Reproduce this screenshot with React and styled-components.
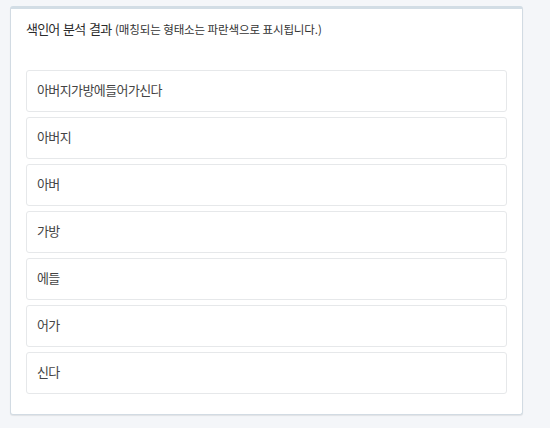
import React from 'react';
import styled, { createGlobalStyle } from 'styled-components';

const GlobalStyle = createGlobalStyle`
  body {
    margin: 0;
    background: #f4f6f9;
    font-family: "Noto Sans CJK KR", "Noto Sans", sans-serif;
    color: #333;
  }
`;

const Page = styled.div`
  padding: 6px 27px 14px 10px;
`;

const Box = styled.section`
  background: #fff;
  border: 1px solid #d2dbe3;
  border-top: 3px solid #d2dde5;
  border-radius: 3px;
  box-shadow: 0 1px 1px rgba(0, 0, 0, 0.08);
  padding: 0 15px 20px;
`;

const Title = styled.h3`
  margin: 0;
  padding: 10px 0 0;
  height: 61px;
  box-sizing: border-box;
  font-size: 13px;
  font-weight: 400;
  line-height: 20px;
  letter-spacing: -0.8px;
  word-spacing: 1.5px;
  color: #2b2b2b;
  small {
    font-size: 11.5px;
    letter-spacing: -0.1px;
    word-spacing: 0;
    color: #333;
  }
`;

const List = styled.ul`
  list-style: none;
  margin: 0;
  padding: 0;
  display: flex;
  flex-direction: column;
  gap: 5px;
`;

const Item = styled.li`
  height: 42px;
  box-sizing: border-box;
  border: 1px solid #e6e8ea;
  border-radius: 3px;
  padding: 0 10px 3px;
  display: flex;
  align-items: center;
  font-size: 13px;
  letter-spacing: -0.6px;
  color: #444;
`;

const words = ['아버지가방에들어가신다', '아버지', '아버', '가방', '에들', '어가', '신다'];

export default function App() {
  return (
    <>
      <GlobalStyle />
      <Page>
        <Box>
          <Title>
            색인어 분석 결과 <small>(매칭되는 형태소는 파란색으로 표시됩니다.)</small>
          </Title>
          <List>
            {words.map((w) => (
              <Item key={w}>{w}</Item>
            ))}
          </List>
        </Box>
      </Page>
    </>
  );
}
